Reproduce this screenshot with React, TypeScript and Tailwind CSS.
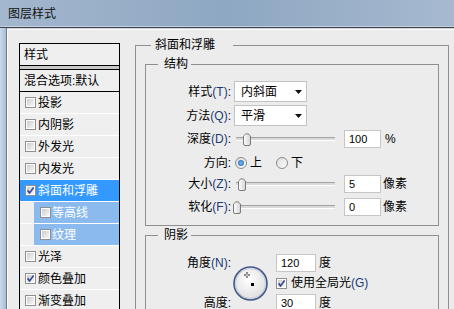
import clsx from 'clsx';

const styles = [
  { t: '投影' },
  { t: '内阴影' },
  { t: '外发光' },
  { t: '内发光' },
  { t: '斜面和浮雕', checked: true, sel: true },
  { t: '等高线', sub: true },
  { t: '纹理', sub: true },
  { t: '光泽' },
  { t: '颜色叠加', checked: true },
  { t: '渐变叠加' },
];

function Check({ checked }: { checked?: boolean }) {
  return (
    <span className="relative flex h-[11px] w-[11px] shrink-0 border border-[#8e8f8f] bg-white p-[1px]">
      <span className="h-full w-full bg-linear-to-br from-[#cdcdcd] to-[#f7f7f7]" />
      {checked && (
        <svg className="absolute left-[0px] top-[0px]" width="9" height="9" viewBox="0 0 9 9">
          <path d="M1.6 4.4 L3.6 6.9 L7.6 1.6" stroke="#34489a" strokeWidth="1.7" fill="none" />
        </svg>
      )}
    </span>
  );
}

function Radio({ on }: { on?: boolean }) {
  return (
    <span className="flex h-[12px] w-[12px] shrink-0 items-center justify-center rounded-full border border-[#8b8b8b] bg-linear-to-br from-[#dedede] to-[#fbfbfb]">
      {on && <span className="h-[6px] w-[6px] rounded-full bg-radial from-[#7cc0f2] to-[#0b5aa3]" />}
    </span>
  );
}

function Label({ zh, k }: { zh: string; k?: string }) {
  return (
    <span className="w-[85px] shrink-0 text-right">
      {zh}
      {k && <span className="text-[#1b3a74]">({k})</span>}:
    </span>
  );
}

function Select({ value }: { value: string }) {
  return (
    <div className="ml-[3px] flex h-[21px] w-[73px] items-center justify-between border border-[#c3c3c3] bg-white pl-[6px] pr-[4px]">
      <span>{value}</span>
      <svg width="7" height="4" viewBox="0 0 7 4">
        <path d="M0 0 H7 L3.5 4 Z" fill="#111" />
      </svg>
    </div>
  );
}

function Slider({ thumb }: { thumb: string }) {
  return (
    <div className="relative ml-[1px] h-[18px] w-[108px] shrink-0">
      <div className="absolute left-[4px] right-[5px] top-[7px] h-[4px] border-t border-b border-t-[#a3a3a3] border-b-white bg-[#d9d9d9]" />
      <svg className={clsx('absolute top-[2px]', thumb)} width="8" height="14" viewBox="0 0 8 14">
        <defs>
          <linearGradient id="tg" x1="0" y1="0" x2="1" y2="0">
            <stop offset="0" stopColor="#ffffff" />
            <stop offset="1" stopColor="#d4d4d4" />
          </linearGradient>
        </defs>
        <path d="M0.5 4 Q4 -0.5 7.5 4 L7.5 12 Q7.5 13.5 6 13.5 L2 13.5 Q0.5 13.5 0.5 12 Z" fill="url(#tg)" stroke="#7b7b7b" />
      </svg>
    </div>
  );
}

function Field({ v, w = 'w-[37px]' }: { v: string; w?: string }) {
  return (
    <div className={clsx('flex h-[18px] shrink-0 items-center border border-[#c6c6c6] bg-white pl-[4px] text-[11px]', w)}>
      {v}
    </div>
  );
}

function Dial() {
  return (
    <svg width="35" height="35" viewBox="0 0 35 35">
      <defs>
        <radialGradient id="dg" cx="0.45" cy="0.4" r="0.6">
          <stop offset="0" stopColor="#ffffff" />
          <stop offset="1" stopColor="#dedede" />
        </radialGradient>
      </defs>
      <circle cx="17.5" cy="17.5" r="16.5" fill="url(#dg)" stroke="#42598a" strokeWidth="1.6" />
      <circle cx="17.5" cy="17.5" r="15" fill="none" stroke="#b8c3d6" strokeWidth="0.8" />
      <path d="M11 9 H13 M15 9 H17 M14 6 V8 M14 10 V12" stroke="#222" strokeWidth="1" />
      <rect x="13.5" y="8.5" width="1" height="1" fill="#222" />
      <rect x="18" y="17" width="3" height="3" fill="#000" />
    </svg>
  );
}

export default function App() {
  return (
    <div className="h-[309px] w-[454px] overflow-hidden bg-[#ececec] font-['Liberation_Sans','Noto_Sans_CJK_SC',sans-serif] text-[12px] leading-none text-black">
      {/* title bar */}
      <div className="flex h-[28px] items-center border-b border-[#3b4756] bg-linear-to-r from-[#a3b7ce] via-[#8ea7c2] to-[#a6b9cf] pl-[8px] text-[#111] shadow-[inset_0_-1px_0_#c4d0de]">
        图层样式
      </div>

      <div className="flex h-[281px]">
        <div className="w-[7px] shrink-0 border-r border-[#6e7c8c] bg-linear-to-r from-[#cad9e9] to-[#a7bed7]" />

        <div className="flex-1 border-t border-[#d2d2d2]">
          <div className="flex h-full items-start border-t border-l border-[#fbfbfb] pl-[11px] pt-[7px]">
            {/* style list */}
            <div className="mt-[6px] w-[101px] shrink-0 border-x border-t border-black bg-[#efefef]">
              <div className="flex h-[22px] items-center border-b border-black pl-[4px]">样式</div>
              <div className="h-[4px] border-b border-black bg-[#c8c8c8]" />
              <div className="flex h-[22px] items-center border-b border-black pl-[4px]">混合选项:默认</div>
              {styles.map((s) =>
                s.sub ? (
                  <div key={s.t} className="flex h-[22px] border-b border-white">
                    <div className="w-[14px] shrink-0" />
                    <div className="flex flex-1 items-center bg-[#8bbaee] pl-[6px] text-white">
                      <Check />
                      <span className="ml-[1px]">{s.t}</span>
                    </div>
                  </div>
                ) : (
                  <div
                    key={s.t}
                    className={clsx(
                      'flex h-[22px] items-center border-b border-white pl-[5px]',
                      s.sel && 'bg-[#3399ff] text-white',
                    )}
                  >
                    <Check checked={s.checked} />
                    <span className="ml-[2px]">{s.t}</span>
                  </div>
                ),
              )}
            </div>

            {/* bevel & emboss */}
            <fieldset className="ml-[15px] w-[314px] shrink-0 border border-[#8f8f8f]">
              <legend className="ml-[15px] pl-[4px] pr-[18px] leading-[16px]">斜面和浮雕</legend>
              <div className="px-[9px] pt-[3px]">
                <fieldset className="border border-[#8f8f8f] pb-[9px]">
                  <legend className="ml-[12px] pl-[6px] pr-[3px] leading-[16px]">结构</legend>
                  <div className="flex flex-col pt-[9px]">
                    <div className="flex h-[21px] items-center">
                      <Label zh="样式" k="T" />
                      <Select value="内斜面" />
                    </div>
                    <div className="mt-[3px] flex h-[21px] items-center">
                      <Label zh="方法" k="Q" />
                      <Select value="平滑" />
                    </div>
                    <div className="mt-[4px] flex h-[18px] items-center">
                      <Label zh="深度" k="D" />
                      <Slider thumb="left-[11px]" />
                      <div className="ml-[4px]">
                        <Field v="100" />
                      </div>
                      <span className="ml-[4px]">%</span>
                    </div>
                    <div className="mt-[4px] flex h-[21px] items-center">
                      <Label zh="方向" />
                      <span className="ml-[4px]">
                        <Radio on />
                      </span>
                      <span className="ml-[3px]">上</span>
                      <span className="ml-[14px]">
                        <Radio />
                      </span>
                      <span className="ml-[3px]">下</span>
                    </div>
                    <div className="mt-[2px] flex h-[18px] items-center">
                      <Label zh="大小" k="Z" />
                      <Slider thumb="left-[6px]" />
                      <div className="ml-[4px]">
                        <Field v="5" />
                      </div>
                      <span className="ml-[2px]">像素</span>
                    </div>
                    <div className="mt-[5px] flex h-[18px] items-center">
                      <Label zh="软化" k="F" />
                      <Slider thumb="left-[1px]" />
                      <div className="ml-[4px]">
                        <Field v="0" />
                      </div>
                      <span className="ml-[2px]">像素</span>
                    </div>
                  </div>
                </fieldset>

                <fieldset className="mt-[1px] h-[120px] border border-[#8f8f8f]">
                  <legend className="ml-[12px] pl-[6px] pr-[3px] leading-[16px]">阴影</legend>
                  <div className="grid grid-cols-[85px_45px_auto] grid-rows-[18px_12px_18px] gap-y-[5px] pt-[11px]">
                    <span className="col-start-1 row-start-1 self-center text-right">
                      角度<span className="text-[#1b3a74]">(N)</span>:
                    </span>
                    <div className="col-start-2 row-start-1 row-span-3 self-center pl-[2px]">
                      <Dial />
                    </div>
                    <div className="col-start-3 row-start-1 flex items-center">
                      <Field v="120" w="w-[40px]" />
                      <span className="ml-[3px]">度</span>
                    </div>
                    <div className="col-start-3 row-start-2 flex items-center">
                      <Check checked />
                      <span className="ml-[4px]">
                        使用全局光<span className="text-[#1b3a74]">(G)</span>
                      </span>
                    </div>
                    <span className="col-start-1 row-start-3 self-center text-right">高度:</span>
                    <div className="col-start-3 row-start-3 flex items-center">
                      <Field v="30" w="w-[40px]" />
                      <span className="ml-[3px]">度</span>
                    </div>
                  </div>
                </fieldset>
              </div>
            </fieldset>
          </div>
        </div>
      </div>
    </div>
  );
}
